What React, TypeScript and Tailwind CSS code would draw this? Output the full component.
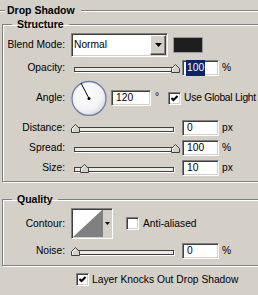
import React from "react";

// classic win2k 3d edges
const sunken =
  "border border-t-[#808080] border-l-[#808080] border-b-white border-r-white shadow-[inset_1px_1px_0_#404040,inset_-1px_-1px_0_#d4d0c8]";
const groupBox =
  "ml-[2px] w-[262px] border border-[#808080] shadow-[inset_1px_1px_0_#fff,1px_1px_0_#fff]";

function Thumb({ left }: { left: number }) {
  return (
    <svg className="absolute top-[4px]" style={{ left }} width="9" height="9" viewBox="0 0 9 9">
      <path d="M0.5 8.5V4.5L4.5 0.5L8.5 4.5V8.5Z" fill="#d4d0c8" stroke="#404040" />
      <path d="M1.5 7.5V4.9L4.5 1.9" fill="none" stroke="#fff" />
    </svg>
  );
}

function Slider({ thumb }: { thumb: number }) {
  return (
    <div className="relative ml-[6px] h-[16px] w-[106px] shrink-0">
      <div className="mx-[3px] mt-[7px] h-[5px] border border-[#404040] bg-[#ece9e2] shadow-[1px_1px_0_#fff]" />
      <Thumb left={thumb} />
    </div>
  );
}

function Field({ value, selected, wide }: { value: string; selected?: boolean; wide?: boolean }) {
  return (
    <div
      className={
        (wide ? "w-[40px] ml-[4px] " : "w-[37px] ml-[5px] ") +
        "flex h-[16px] shrink-0 items-center bg-white pl-[3px] " +
        sunken
      }
    >
      {selected ? <span className="bg-[#0a246a] px-[1px] text-white">{value}</span> : <span className="pl-[1px]">{value}</span>}
    </div>
  );
}

function Check({ checked }: { checked?: boolean }) {
  return (
    <span className={"flex h-[13px] w-[13px] shrink-0 items-center justify-center bg-white " + sunken}>
      {checked && (
        <svg width="7" height="7" viewBox="0 0 7 7">
          <polyline points="0.5,3 2.5,5 6.5,1" fill="none" stroke="#000" strokeWidth="2" />
        </svg>
      )}
    </span>
  );
}

function SliderRow({ label, thumb, value, unit, selected, first }: { label: string; thumb: number; value: string; unit: string; selected?: boolean; first?: boolean }) {
  return (
    <div className={(first ? "mt-[3px] " : "mt-[4px] ") + "flex h-[16px] items-center"}>
      <span className="w-[62px] text-right">{label}</span>
      <Slider thumb={thumb} />
      <Field value={value} selected={selected} />
      <span className="ml-[3px]">{unit}</span>
    </div>
  );
}

function EtchedLine({ className }: { className: string }) {
  return <div className={"h-0 border-t border-b border-t-[#808080] border-b-white " + className} />;
}

export default function App() {
  return (
    <div className="h-[295px] w-[258px] overflow-hidden bg-[#d4d0c8] font-['Liberation_Sans',Arial,sans-serif] text-[10.25px] text-black">
      {/* Header */}
      <div className="mt-[4px] flex h-[13px] items-center">
        <EtchedLine className="w-[5px]" />
        <span className="ml-[2px] text-[10.5px] font-bold">Drop Shadow</span>
        <EtchedLine className="ml-[6px] flex-1" />
      </div>

      {/* Structure */}
      <fieldset className={groupBox + " mt-[1px] pb-[5px]"}>
        <legend className="ml-[9px] px-[5px] text-[10.5px] font-bold leading-[13px]">Structure</legend>

        <div className="mt-[2px] flex h-[24px] items-center">
          <span className="w-[62px] text-right">Blend Mode:</span>
          <div className={"ml-[6px] flex h-[24px] w-[97px] items-center bg-white " + sunken}>
            <span className="flex-1 pl-[2px]">Normal</span>
            <div className="mr-[1px] flex h-[20px] w-[16px] items-center justify-center border border-t-white border-l-white border-b-[#404040] border-r-[#404040] bg-[#d4d0c8] shadow-[inset_-1px_-1px_0_#808080]">
              <svg width="7" height="4" viewBox="0 0 7 4">
                <path d="M0 0H7L3.5 4Z" fill="#000" />
              </svg>
            </div>
          </div>
          <div className="ml-[5px] h-[16px] w-[30px] border border-[#9a9a9a] bg-[#1e1e1e]" />
        </div>

        <SliderRow first label="Opacity:" thumb={100} value="100" unit="%" selected />

        <div className="mt-[4px] flex h-[36px] items-center">
          <span className="w-[62px] text-right">Angle:</span>
          <svg className="ml-[6px] shrink-0" width="36" height="36" viewBox="0 0 36 36">
            <defs>
              <radialGradient id="dial" cx="42%" cy="38%" r="65%">
                <stop offset="0" stopColor="#ffffff" />
                <stop offset="0.7" stopColor="#f3f3f5" />
                <stop offset="1" stopColor="#d5d7e0" />
              </radialGradient>
            </defs>
            <circle cx="18" cy="18.5" r="17" fill="url(#dial)" stroke="#6a7ea8" strokeWidth="1.3" />
            <line x1="18" y1="18.5" x2="10" y2="3" stroke="#000" strokeWidth="1" />
            <circle cx="18" cy="18.5" r="1.5" fill="#000" />
          </svg>
          <Field value="120" wide />
          <span className="ml-[4px] self-start pt-[9px]">°</span>
          <span className="ml-[9px]">
            <Check checked />
          </span>
          <span className="ml-[3px] whitespace-nowrap tracking-[-0.25px]">Use Global Light</span>
        </div>

        <SliderRow label="Distance:" thumb={0} value="0" unit="px" />
        <SliderRow label="Spread:" thumb={100} value="100" unit="%" />
        <SliderRow label="Size:" thumb={9} value="10" unit="px" />
      </fieldset>

      {/* Quality */}
      <fieldset className={groupBox + " mt-[11px] pb-[6px]"}>
        <legend className="ml-[9px] px-[5px] text-[10.5px] font-bold leading-[13px]">Quality</legend>

        <div className="mt-[2px] flex h-[31px] items-center">
          <span className="w-[62px] text-right">Contour:</span>
          <div className={"ml-[6px] flex h-[31px] w-[42px] bg-white " + sunken}>
            <svg className="mt-[1px] ml-[1px]" width="29" height="27" viewBox="0 0 29 27">
              <polygon points="0,27 29,0 29,27" fill="#808080" />
            </svg>
            <div className="my-[1px] flex w-[9px] items-center justify-center border-l border-[#808080] bg-[#d4d0c8]">
              <svg width="5" height="3" viewBox="0 0 5 3">
                <path d="M0 0H5L2.5 3Z" fill="#000" />
              </svg>
            </div>
          </div>
          <span className="ml-[13px]">
            <Check />
          </span>
          <span className="ml-[4px]">Anti-aliased</span>
        </div>

        <SliderRow label="Noise:" thumb={0} value="0" unit="%" />
      </fieldset>

      <div className="mt-[6px] flex items-center pl-[76px]">
        <Check checked />
        <span className="ml-[3px] whitespace-nowrap">Layer Knocks Out Drop Shadow</span>
      </div>
    </div>
  );
}
